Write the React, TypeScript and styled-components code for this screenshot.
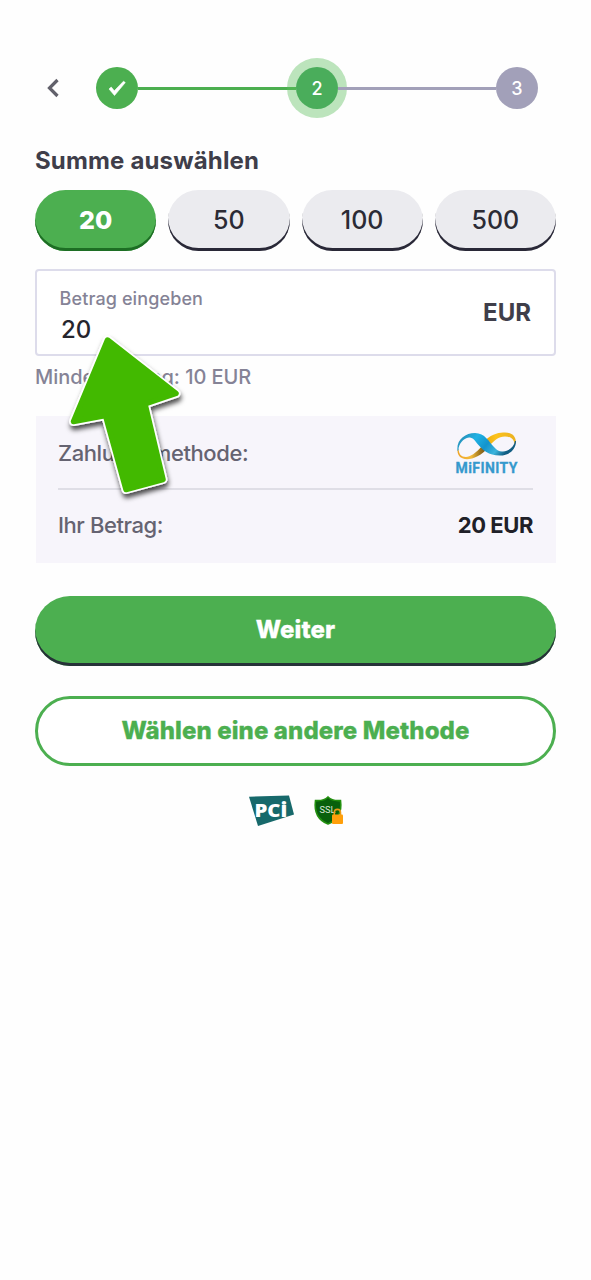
import React from "react";
import styled, { createGlobalStyle } from "styled-components";

const Global = createGlobalStyle`
  * { box-sizing: border-box; }
  body { margin: 0; background: #fefefe; font-family: Inter, "Liberation Sans", sans-serif; }
  button, input { font-family: inherit; }
`;

const Page = styled.main`
  position: relative;
  width: 521px;
  min-height: 1280px;
  margin: 0 auto;
  padding-top: 58px;
`;

const Stepper = styled.nav`
  display: flex;
  align-items: center;
  height: 60px;
  padding: 0 18px 0 11px;
`;

const Back = styled.button`
  display: flex;
  width: 50px;
  padding: 0;
  border: 0;
  background: none;
`;

const Step = styled.div<{ $tone: string; $active?: boolean }>`
  display: flex;
  flex: none;
  align-items: center;
  justify-content: center;
  width: 42px;
  height: 42px;
  border-radius: 50%;
  background: ${(p) => p.$tone};
  box-shadow: ${(p) => (p.$active ? "0 0 0 9px rgba(90, 191, 91, 0.4)" : "none")};
  color: #fff;
  font-size: 18px;
  font-weight: 500;
`;

const Track = styled.div<{ $tone: string }>`
  flex: 1;
  height: 3px;
  background: ${(p) => p.$tone};
`;

const Title = styled.h1`
  margin: 27px 0 0;
  color: #3f3e4a;
  font-size: 24px;
  font-weight: 700;
  letter-spacing: 0.16px;
  line-height: 32px;
`;

const Chips = styled.div`
  display: grid;
  grid-template-columns: repeat(4, 1fr);
  gap: 12px;
  margin-top: 13px;
`;

const Chip = styled.button<{ $selected?: boolean }>`
  height: 61px;
  padding: 0 0 2px;
  border: 0;
  border-radius: 31px;
  background: ${(p) => (p.$selected ? "#4caf50" : "#ebebef")};
  box-shadow: inset 0 -3px 0 ${(p) => (p.$selected ? "#1d6e24" : "#292837")};
  color: ${(p) => (p.$selected ? "#fff" : "#2b2b35")};
  font-size: 25px;
  font-weight: ${(p) => (p.$selected ? 800 : 500)};
`;

const Field = styled.label`
  display: flex;
  align-items: center;
  justify-content: space-between;
  height: 87px;
  margin-top: 18px;
  padding: 0 23px 0 22px;
  border: 2px solid #dddceb;
  border-radius: 4px;
  background: #fff;
`;

const FieldBody = styled.span`
  display: flex;
  flex-direction: column;
  padding-top: 8px;
`;

const FieldLabel = styled.span`
  padding-left: 0.5px;
  color: #858396;
  font-size: 18px;
  font-weight: 500;
  letter-spacing: 0.12px;
  line-height: 24px;
`;

const FieldValue = styled.span`
  padding: 3px 0 0 2px;
  color: #25252d;
  font-size: 24px;
  font-weight: 500;
  line-height: 32px;
`;

const Currency = styled.span`
  color: #3f3e4a;
  font-size: 24px;
  font-weight: 700;
`;

const Hint = styled.p`
  margin: 8px 0 0;
  color: #858396;
  font-size: 20px;
  font-weight: 500;
  letter-spacing: -0.04px;
  line-height: 26px;
`;

const Summary = styled.section`
  height: 147px;
  margin: 26px 0 0 1px;
  padding: 0 23px 0 22px;
  background: #f7f5fb;
`;

const SummaryRow = styled.div<{ $divided?: boolean }>`
  display: flex;
  align-items: center;
  justify-content: space-between;
  height: ${(p) => (p.$divided ? 74 : 70)}px;
  padding-top: ${(p) => (p.$divided ? 2 : 0)}px;
  border-bottom: ${(p) => (p.$divided ? "2px solid #dfdee6" : "0")};
  color: #656371;
  font-size: 22px;
  font-weight: 500;
  letter-spacing: -0.43px;
`;

const Total = styled.strong`
  color: #202028;
  font-weight: 700;
`;

const Action = styled.button<{ $outline?: boolean }>`
  display: block;
  width: 100%;
  height: 70px;
  margin-top: ${(p) => (p.$outline ? 30 : 33)}px;
  padding: 0 0 ${(p) => (p.$outline ? 1 : 4)}px;
  border: ${(p) => (p.$outline ? "3px solid #4caf50" : "0")};
  border-radius: 35px;
  background: ${(p) => (p.$outline ? "#fff" : "#4caf50")};
  box-shadow: ${(p) => (p.$outline ? "none" : "inset 0 -3px 0 #263238")};
  color: ${(p) => (p.$outline ? "#4caf50" : "#fff")};
  font-size: 24px;
  font-weight: 800;
  letter-spacing: 0.1px;
  -webkit-text-stroke: 0.3px currentColor;
`;

const Badges = styled.footer`
  display: flex;
  justify-content: center;
  align-items: center;
  gap: 19px;
  margin-top: 29px;
`;

const Badge = styled.svg`
  overflow: visible;
`;

const Pointer = styled.svg`
  position: absolute;
  left: 25px;
  top: 326px;
  pointer-events: none;
`;

const Logo = styled.svg`
  margin-right: 13px;
  overflow: visible;
  letter-spacing: 0;
`;

const MiFinity = () => (
  <Logo width="66" height="48" viewBox="0 -1 66 48">
    <defs>
      <linearGradient id="loopLeft" x1="0" y1="0" x2="1" y2="0">
        <stop offset="0" stopColor="#f0a527" />
        <stop offset="0.45" stopColor="#f2bb3c" />
        <stop offset="0.75" stopColor="#9a711c" />
        <stop offset="1" stopColor="#5c4a20" />
      </linearGradient>
      <linearGradient id="loopRight" x1="0" y1="0" x2="1" y2="0">
        <stop offset="0" stopColor="#e9a90f" />
        <stop offset="0.35" stopColor="#fcc21b" />
        <stop offset="1" stopColor="#eab122" />
      </linearGradient>
      <linearGradient id="band" x1="0" y1="0" x2="1" y2="0.3">
        <stop offset="0" stopColor="#2b83a8" />
        <stop offset="0.35" stopColor="#20b2e4" />
        <stop offset="0.6" stopColor="#1393cc" />
        <stop offset="0.82" stopColor="#3cb4dc" />
        <stop offset="1" stopColor="#125d83" />
      </linearGradient>
    </defs>
    <path d="M3.500 20C3 33 22 32 34 18L28 16C22 23 16 27 12 27C7 27 5 24 4.500 19Z" fill="url(#loopLeft)" />
    <path d="M31 10.500C39 3 46 2.500 51 2.500C58 2.500 62 6 62 13L60.500 14C60 8.500 56 6.500 51 6.500C44 7 41 10 36 15Z" fill="url(#loopRight)" />
    <path d="M3.500 21C2 10 11 3 21 3C31 3 35 12 40 17C43 20.500 46 22 49 21.500C55 21 60 17 61 11L62 11C62 20 55 25.500 46 25.500C34 25.500 29 20 24 14.500C21 11 19 7 15 7.500C9 8.500 4.500 14 4.500 20Z" fill="url(#band)" />
    <text x="1.500" y="43" textLength="62" lengthAdjust="spacing" fill="#3599cd" stroke="#3599cd" strokeWidth="0.300" fontFamily="Roboto, sans-serif" fontSize="14" fontWeight="700">MiFINITY</text>
  </Logo>
);

const Pci = () => (
  <Badge width="47" height="32" viewBox="0 0 47 32">
    <path d="M1 1.700L41 0.500L46 19.500L10 31Z" fill="#17696b" />
    <g fill="#fff" fontFamily="Open Sans, sans-serif" fontWeight="800">
      <text x="6.500" y="22" fontSize="17.500" textLength="26" lengthAdjust="spacingAndGlyphs">PC</text>
      <text x="32.500" y="22" fontSize="21">i</text>
    </g>
  </Badge>
);

const Ssl = () => (
  <Badge width="30" height="32" viewBox="0 0 30 32">
    <path d="M14 2C17 5 21 6 26.500 5.500C28 17 24 25 14 29C4 25 0 17 1.500 5.500C7 6 11 5 14 2Z" fill="#08600c" stroke="#239010" strokeWidth="1.600" />
    <text x="5.500" y="18" textLength="16" lengthAdjust="spacingAndGlyphs" fill="#d9e6d7" fontFamily="Roboto, sans-serif" fontSize="9">SSL</text>
    <path d="M20.300 20V17.500A3.100 3.100 0 0 1 26.500 17.500V20" fill="none" stroke="#e99b17" strokeWidth="1.600" />
    <rect x="18" y="19.500" width="11" height="9.500" rx="1" fill="#ff9f0a" />
  </Badge>
);

const ARROW = "M107.500 340L176 393.500L145 404L163 479.500L126 489.500L105.500 415.500L73.500 421.500Z";

export default function App() {
  return (
    <>
      <Global />
      <Page>
        <Stepper>
          <Back aria-label="Zurück">
            <svg width="14" height="20" viewBox="0 0 14 20" fill="none" stroke="#62616b" strokeWidth="3.200">
              <path d="M11.500 2L3.500 10L11.500 18" />
            </svg>
          </Back>
          <Step $tone="#4caf50">
            <svg width="18" height="16" viewBox="0 0 18 16">
              <path d="M1 9L3.200 7L6.300 10.800L15.500 1.200L17.300 2.600L6.500 15.500Z" fill="#fff" stroke="#fff" strokeWidth="0.600" strokeLinejoin="round" />
            </svg>
          </Step>
          <Track $tone="#4caf50" />
          <Step $tone="#4aad5b" $active>2</Step>
          <Track $tone="#a2a0b9" />
          <Step $tone="#a2a0b9">3</Step>
        </Stepper>

        <Title>Summe auswählen</Title>
        <Chips>
          <Chip $selected>20</Chip>
          <Chip>50</Chip>
          <Chip>100</Chip>
          <Chip>500</Chip>
        </Chips>

        <Field>
          <FieldBody>
            <FieldLabel>Betrag eingeben</FieldLabel>
            <FieldValue>20</FieldValue>
          </FieldBody>
          <Currency>EUR</Currency>
        </Field>
        <Hint>Mindestbetrag: 10 EUR</Hint>

        <Summary>
          <SummaryRow $divided>
            <span>Zahlungsmethode:</span>
            <MiFinity />
          </SummaryRow>
          <SummaryRow>
            <span>Ihr Betrag:</span>
            <Total>20 EUR</Total>
          </SummaryRow>
        </Summary>

        <Action>Weiter</Action>
        <Action $outline>Wählen eine andere Methode</Action>

        <Badges>
          <Pci />
          <Ssl />
        </Badges>

        <Pointer width="130" height="180" viewBox="60 326 130 180">
          <defs>
            <filter id="drop" x="-20%" y="-20%" width="140%" height="140%">
              <feDropShadow dx="1" dy="4" stdDeviation="2.5" floodColor="#000" floodOpacity="0.7" />
            </filter>
          </defs>
          <g filter="url(#drop)" strokeLinejoin="round">
            <path d={ARROW} fill="#fff" stroke="#fff" strokeWidth="9" />
            <path d={ARROW} fill="#43b900" stroke="#43b900" strokeWidth="5.500" />
          </g>
        </Pointer>
      </Page>
    </>
  );
}
